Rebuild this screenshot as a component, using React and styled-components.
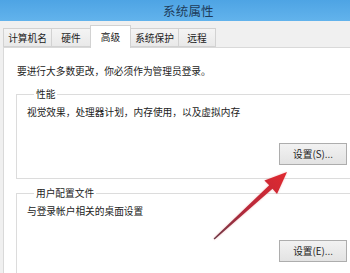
import React from "react";
import styled, { createGlobalStyle } from "styled-components";

const GlobalStyle = createGlobalStyle`
  html, body {
    margin: 0;
    padding: 0;
    background: #f0f0f0;
  }
  body {
    font-family: "Noto Sans CJK SC", "Noto Sans", sans-serif;
  }
`;

const Window = styled.div`
  position: relative;
  width: 350px;
  height: 273px;
  overflow: hidden;
  background: #f0f0f0;
`;

const TitleBar = styled.div`
  height: 21px;
  display: flex;
  align-items: center;
  padding-left: 163px;
  background: linear-gradient(#4ea4e4, #62b3ec);
  color: #1d3b5a;
  font-size: 12.5px;
  letter-spacing: 0.2px;
`;

const TabRow = styled.div`
  display: flex;
  align-items: flex-end;
  height: 26px;
  padding-left: 3px;
  position: relative;
  z-index: 2;
`;

const Tab = styled.div`
  box-sizing: border-box;
  width: ${(p) => p.$w}px;
  height: ${(p) => (p.$active ? 23 : 19)}px;
  margin-left: ${(p) => (p.$first ? 0 : -1)}px;
  margin-bottom: ${(p) => (p.$active ? -1 : 0)}px;
  display: flex;
  align-items: center;
  justify-content: center;
  padding-top: ${(p) => (p.$active ? 0 : 1)}px;
  border: 1px solid #d2d2d2;
  border-bottom: ${(p) => (p.$active ? "none" : "1px solid #d2d2d2")};
  background: ${(p) => (p.$active ? "#ffffff" : "linear-gradient(#f4f4f4, #e9e9e9)")};
  color: #222;
  font-size: 9.7px;
  position: relative;
  z-index: ${(p) => (p.$active ? 2 : 1)};
`;

const Panel = styled.div`
  box-sizing: border-box;
  width: 364px;
  height: 240px;
  margin-left: 3px;
  padding: 17px 11px 0 12px;
  background: #ffffff;
  border: 1px solid #d9d9d9;
  position: relative;
  z-index: 1;
`;

const Note = styled.div`
  font-size: 9.7px;
  line-height: 12px;
  color: #222;
  padding-left: 1px;
`;

const Group = styled.fieldset`
  margin: ${(p) => p.$top}px 0 0 0;
  padding: 6px 7px 13px 10px;
  border: 1px solid #dcdcdc;
  min-width: 0;
  display: flex;
  flex-direction: column;
`;

const Legend = styled.legend`
  margin-left: 7px;
  padding: 0 2px;
  font-size: 9.7px;
  line-height: 12px;
  color: #222;
`;

const Desc = styled.div`
  font-size: 9.7px;
  line-height: 12px;
  color: #222;
`;

const Button = styled.button`
  align-self: flex-end;
  margin-top: ${(p) => p.$gap}px;
  width: 68px;
  height: 22px;
  padding: 0;
  border: 1px solid #adadad;
  background: linear-gradient(#f2f2f2, #e3e3e3);
  color: #222;
  font-family: "Noto Sans CJK SC", "Noto Sans", sans-serif;
  font-size: 9.7px;
`;

const ArrowLayer = styled.svg`
  position: absolute;
  left: 0;
  top: 0;
  z-index: 5;
  pointer-events: none;
`;

function Arrow() {
  return (
    <ArrowLayer width="350" height="273" viewBox="0 0 350 273">
      <defs>
        <linearGradient id="arrowGrad" x1="214" y1="239" x2="287" y2="172" gradientUnits="userSpaceOnUse">
          <stop offset="0" stopColor="#6e3a48" />
          <stop offset="0.45" stopColor="#b8283a" />
          <stop offset="1" stopColor="#e02a30" />
        </linearGradient>
        <filter id="glow" x="-20%" y="-20%" width="140%" height="140%">
          <feGaussianBlur stdDeviation="0.8" />
        </filter>
      </defs>
      <polygon
        points="287,172 277,194 272.5,188.8 214.6,239.6 213.6,238.5 269.2,185.2 264.4,180.4"
        fill="#e88a8a"
        opacity="0.5"
        filter="url(#glow)"
      />
      <polygon
        points="287,172 277,194 272.5,188.8 214.6,239.6 213.6,238.5 269.2,185.2 264.4,180.4"
        fill="url(#arrowGrad)"
      />
    </ArrowLayer>
  );
}

export default function App() {
  return (
    <>
      <GlobalStyle />
      <Window>
        <TitleBar>系统属性</TitleBar>
        <TabRow>
          <Tab $first $w={49}>计算机名</Tab>
          <Tab $w={40}>硬件</Tab>
          <Tab $active $w={41}>高级</Tab>
          <Tab $w={49}>系统保护</Tab>
          <Tab $w={38}>远程</Tab>
        </TabRow>
        <Panel>
          <Note>要进行大多数更改，你必须作为管理员登录。</Note>
          <Group $top={11}>
            <Legend>性能</Legend>
            <Desc>视觉效果，处理器计划，内存使用，以及虚拟内存</Desc>
            <Button $gap={25}>设置(S)...</Button>
          </Group>
          <Group $top={8}>
            <Legend>用户配置文件</Legend>
            <Desc>与登录帐户相关的桌面设置</Desc>
            <Button $gap={23}>设置(E)...</Button>
          </Group>
        </Panel>
        <Arrow />
      </Window>
    </>
  );
}
